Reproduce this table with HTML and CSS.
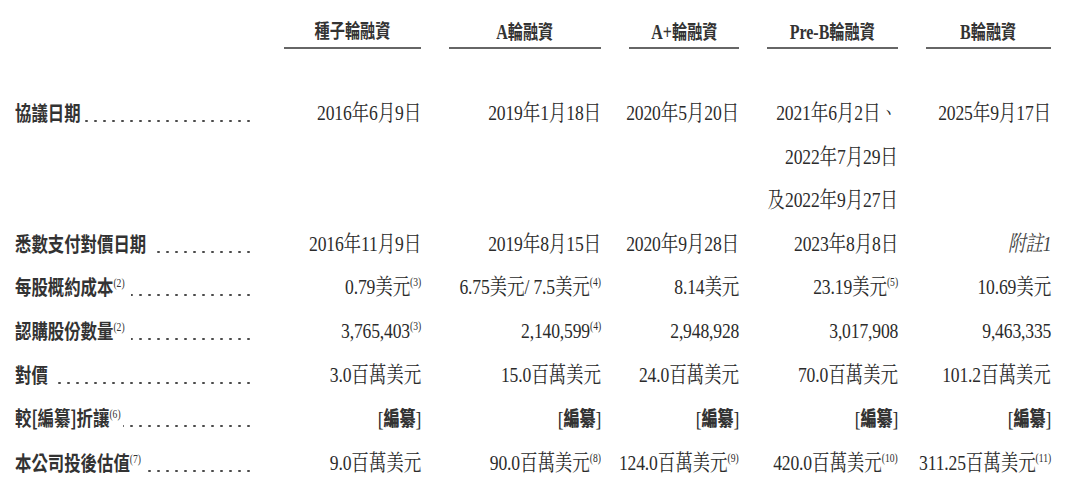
FILE: index.html
```html
<!DOCTYPE html>
<html lang="zh-Hant">
<head>
<meta charset="utf-8">
<title>融資輪次</title>
<link rel="stylesheet" href="styles.css">
</head>
<body>
<div class="sheet">
  <div class="grid head">
    <div class="hcell blank"></div>
    <div class="hcell"><span class="t">種子輪融資</span></div>
    <div class="hcell"><span class="t"><span class="lat">A</span>輪融資</span></div>
    <div class="hcell"><span class="t"><span class="lat">A+</span>輪融資</span></div>
    <div class="hcell"><span class="t"><span class="lat">Pre-B</span>輪融資</span></div>
    <div class="hcell"><span class="t"><span class="lat">B</span>輪融資</span></div>
  </div>
  <div class="grid body">
    <div class="label"><span class="lt">協議日期</span></div>
    <div class="val"><span class="t">2016年6月9日</span></div>
    <div class="val"><span class="t">2019年1月18日</span></div>
    <div class="val"><span class="t">2020年5月20日</span></div>
    <div class="val"><span class="t">2021年6月2日、<br>2022年7月29日<br>及2022年9月27日</span></div>
    <div class="val"><span class="t">2025年9月17日</span></div>

    <div class="label"><span class="lt">悉數支付對價日期&nbsp;</span></div>
    <div class="val"><span class="t">2016年11月9日</span></div>
    <div class="val"><span class="t">2019年8月15日</span></div>
    <div class="val"><span class="t">2020年9月28日</span></div>
    <div class="val"><span class="t">2023年8月8日</span></div>
    <div class="val"><span class="t"><i class="note">附註1</i></span></div>

    <div class="label"><span class="lt">每股概約成本<sup class="fn">(2)</sup>&nbsp;</span></div>
    <div class="val"><span class="t">0.79美元<sup class="fn">(3)</sup></span></div>
    <div class="val"><span class="t">6.75美元/ 7.5美元<sup class="fn">(4)</sup></span></div>
    <div class="val"><span class="t">8.14美元</span></div>
    <div class="val"><span class="t">23.19美元<sup class="fn">(5)</sup></span></div>
    <div class="val"><span class="t">10.69美元</span></div>

    <div class="label"><span class="lt">認購股份數量<sup class="fn">(2)</sup>&nbsp;</span></div>
    <div class="val"><span class="t">3,765,403<sup class="fn">(3)</sup></span></div>
    <div class="val"><span class="t">2,140,599<sup class="fn">(4)</sup></span></div>
    <div class="val"><span class="t">2,948,928</span></div>
    <div class="val"><span class="t">3,017,908</span></div>
    <div class="val"><span class="t">9,463,335</span></div>

    <div class="label"><span class="lt">對價&nbsp;</span></div>
    <div class="val"><span class="t">3.0百萬美元</span></div>
    <div class="val"><span class="t">15.0百萬美元</span></div>
    <div class="val"><span class="t">24.0百萬美元</span></div>
    <div class="val"><span class="t">70.0百萬美元</span></div>
    <div class="val"><span class="t">101.2百萬美元</span></div>

    <div class="label"><span class="lt">較[編纂]折讓<sup class="fn">(6)</sup></span></div>
    <div class="val"><span class="t">[<b class="red">編纂</b>]</span></div>
    <div class="val"><span class="t">[<b class="red">編纂</b>]</span></div>
    <div class="val"><span class="t">[<b class="red">編纂</b>]</span></div>
    <div class="val"><span class="t">[<b class="red">編纂</b>]</span></div>
    <div class="val"><span class="t">[<b class="red">編纂</b>]</span></div>

    <div class="label"><span class="lt">本公司投後估值<sup class="fn">(7)</sup></span></div>
    <div class="val"><span class="t">9.0百萬美元</span></div>
    <div class="val"><span class="t">90.0百萬美元<sup class="fn">(8)</sup></span></div>
    <div class="val"><span class="t">124.0百萬美元<sup class="fn">(9)</sup></span></div>
    <div class="val"><span class="t">420.0百萬美元<sup class="fn">(10)</sup></span></div>
    <div class="val"><span class="t">311.25百萬美元<sup class="fn">(11)</sup></span></div>
  </div>
</div>
</body>
</html>
```
FILE: styles.css
```css
html, body {
  margin: 0;
  padding: 0;
  background: #ffffff;
}

body {
  color: #2b2b2b;
  font-family: "Liberation Serif", "Noto Serif CJK TC", "Noto Sans CJK TC", serif;
  overflow: hidden;
}

.sheet {
  width: 1080px;
}

.grid {
  display: grid;
  grid-template-columns: 241px 137px 152px 110px 131px 125px;
  column-gap: 28px;
  padding-left: 15px;
}

/* header */
.hcell {
  padding-top: 17px;
  line-height: 30px;
  height: 30px;
  text-align: center;
  white-space: nowrap;
  font-family: "Liberation Serif", "Noto Sans CJK TC", sans-serif;
  font-weight: 700;
  font-size: 19px;
  color: #333333;
  border-bottom: 2px solid #666666;
}

.hcell .t {
  display: inline-block;
  transform: scaleX(0.8);
  transform-origin: center center;
}

.hcell .lat {
  font-size: 20px;
}

.hcell.blank {
  border-bottom: none;
}

/* body rows */
.body {
  margin-top: 42px;
}

.label,
.val {
  line-height: 43.6px;
  white-space: nowrap;
}

.label {
  height: 43.6px;
  background-image: radial-gradient(circle at center, #4a4a4a 1px, rgba(255, 255, 255, 0) 1.5px);
  background-size: 9px 4px;
  background-repeat: repeat-x;
  background-position: right 3px top 28px;
}

.lt {
  display: inline-block;
  vertical-align: top;
  height: 43.6px;
  background: #ffffff;
  padding-right: 3px;
  font-family: "Noto Sans CJK TC", sans-serif;
  font-weight: 700;
  font-size: 20.5px;
  color: #333333;
  transform: scaleX(0.8);
  transform-origin: left center;
}

.val {
  display: flex;
  justify-content: flex-end;
  align-items: flex-start;
  font-size: 22px;
  letter-spacing: -0.2px;
}

.val .t {
  display: block;
  flex: none;
  text-align: right;
  transform: scaleX(0.8);
  transform-origin: right center;
}

.fn {
  font-family: "Liberation Serif", serif;
  font-size: 12px;
  font-weight: 400;
  line-height: 0;
  vertical-align: 8px;
  letter-spacing: 0;
}

.note {
  font-style: italic;
  color: #444444;
}

.red {
  font-family: "Noto Sans CJK TC", sans-serif;
  font-weight: 900;
  font-size: 20px;
  letter-spacing: 0;
  color: #333333;
}
```
